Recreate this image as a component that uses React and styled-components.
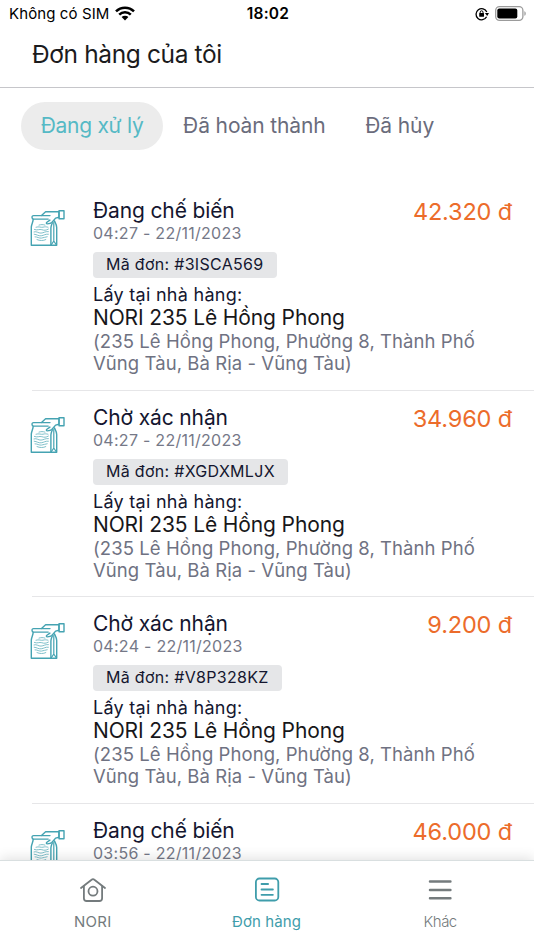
import React, { useState } from "react";
import styled, { createGlobalStyle } from "styled-components";

const tabs = ["Đang xử lý", "Đã hoàn thành", "Đã hủy"];

const orders = [
  { id: 1, status: "Đang chế biến", time: "04:27 - 22/11/2023", code: "#3ISCA569", price: "42.320 đ" },
  { id: 2, status: "Chờ xác nhận", time: "04:27 - 22/11/2023", code: "#XGDXMLJX", price: "34.960 đ" },
  { id: 3, status: "Chờ xác nhận", time: "04:24 - 22/11/2023", code: "#V8P328KZ", price: "9.200 đ" },
  { id: 4, status: "Đang chế biến", time: "03:56 - 22/11/2023", price: "46.000 đ" },
];

const WifiIcon = () => (
  <svg width="20" height="15" viewBox="0 0 20 15">
    <g fill="none" stroke="#000" strokeWidth="2.5">
      <path d="M1 5.4a12.7 12.7 0 0 1 18 0" />
      <path d="M4.2 8.7a8.2 8.2 0 0 1 11.6 0" />
    </g>
    <path d="M6.6 11.1a4.8 4.8 0 0 1 6.8 0L10 14.6z" />
  </svg>
);

const LockIcon = () => (
  <svg width="14" height="14" viewBox="0 0 14 14">
    <g fill="none" stroke="#000" strokeWidth="1.3">
      <path d="M11.6 9.8A5.6 5.6 0 1 1 11.8 5" />
      <path d="M5.2 6.4V5.2a1.4 1.4 0 0 1 2.8 0v1.2" strokeWidth="1" />
    </g>
    <rect x="4.2" y="6" width="4.8" height="3.7" rx="0.5" />
    <path d="M9.9 6h4.1L12.2 9z" />
  </svg>
);

const BatteryIcon = () => (
  <svg width="32" height="15" viewBox="0 0 32 15">
    <rect x="0.7" y="0.7" width="27.2" height="13.6" rx="3.8" fill="none" stroke="#9b9b9b" strokeWidth="1.3" />
    <rect x="2.3" y="2.5" width="20" height="10" rx="2" />
    <path d="M29.4 5.2c1.8.6 1.8 4 0 4.6z" fill="#9b9b9b" />
  </svg>
);

const BagIcon = () => (
  <svg width="36" height="38" viewBox="0 0 36 38" fill="none" stroke="#45a3b2" strokeLinejoin="round" strokeLinecap="round">
    <g strokeWidth="1.4">
      <path d="M20 5.6H3.6c-1.2 0-1.6.7-1.6 1.7s.5 1.8 1.6 1.8h14.6" />
      <path d="M3.2 9.4C3 12.4 1.3 14.4 1.3 17.5v17.8h25.4V17.5c0-3-1.4-4.6-2.3-6.6" />
      <path d="M11.5 5.4 15.6 1.7H29v5.6l-3.4.8-3.8 4.4c-1 1-2.4 1.3-4.4 1.4-1.2 0-1.3-1-.5-1.6l3-2.2" />
      <path d="M29 .8h5v7.9h-5z" />
      <path d="M20.9 35V18c0-2 .8-3.4 1.4-5" />
      <path d="M23.8 12.4V31l-2.7 4M23.8 31l2.6 4" strokeWidth="1.2" />
    </g>
    <g strokeWidth="0.8" opacity="0.85">
      <path d="M9 15.1c2-.7 4-.7 6 0" />
      <path d="M6 17.2c3-1 5 .5 7 0s3-.5 5 0" />
      <path d="M4.4 19.5c3 1.2 5-.6 7.4.2s4 .8 6.6-.6" />
      <path d="M4 21.9c3-1 4 1.4 7 1.2s4-1.9 7.4-1.5" />
      <path d="M4.2 24.2c3 .2 4 2 7 1.6s4-2 7.2-1.6" />
      <path d="M5 26.8c2.6 0 4 1.6 6.4 1.3s3.8-1.2 5.8-1.4" />
      <path d="M7 29.6c3 1.3 6 1.3 8.8 0" />
    </g>
  </svg>
);

const HomeIcon = () => (
  <svg width="28" height="26" viewBox="0 0 28 26" fill="none" stroke="currentColor" strokeWidth="1.8" strokeLinecap="round" strokeLinejoin="round">
    <path d="M2 11 12.6 2.7a2.2 2.2 0 0 1 2.8 0L26 11" />
    <path d="M4.9 9v12.2a2.8 2.8 0 0 0 2.8 2.8h12.6a2.8 2.8 0 0 0 2.8-2.8V9" />
    <circle cx="14" cy="14.2" r="4.5" />
  </svg>
);

const OrdersIcon = () => (
  <svg width="26" height="26" viewBox="0 0 26 26" fill="none" stroke="currentColor" strokeWidth="1.8" strokeLinecap="round">
    <rect x="1.9" y="1.5" width="22.4" height="22" rx="3.6" />
    <path d="M7.5 7h6.6M7.5 12.5h11.4M7.5 17.8h11.4" />
  </svg>
);

const MenuIcon = () => (
  <svg width="26" height="26" viewBox="0 0 26 26" fill="none" stroke="currentColor" strokeWidth="2.5" strokeLinecap="round">
    <path d="M3 4.4h20.4M3 12.9h20.4M3 21.3h20.4" />
  </svg>
);

const navItems = [
  { label: "NORI", Icon: HomeIcon, spacing: "0.3px" },
  { label: "Đơn hàng", Icon: OrdersIcon, spacing: "0.1px" },
  { label: "Khác", Icon: MenuIcon, spacing: "-0.5px", light: true },
];

const App = () => {
  const [tab, setTab] = useState(0);
  return (
    <Screen>
      <GlobalStyle />
      <StatusBar>
        <Carrier>
          Không có SIM <WifiIcon />
        </Carrier>
        <Clock>18:02</Clock>
        <Indicators>
          <LockIcon />
          <BatteryIcon />
        </Indicators>
      </StatusBar>
      <Header>Đơn hàng của tôi</Header>
      <Tabs>
        {tabs.map((name, i) => (
          <Tab key={name} $active={i === tab} onClick={() => setTab(i)}>
            {name}
          </Tab>
        ))}
      </Tabs>
      <List>
        {orders.map((order) => (
          <Order key={order.id}>
            <BagIcon />
            <Details>
              <Status>{order.status}</Status>
              <Time>{order.time}</Time>
              {order.code && (
                <>
                  <Code>Mã đơn: {order.code}</Code>
                  <Pickup>Lấy tại nhà hàng:</Pickup>
                  <Place>NORI 235 Lê Hồng Phong</Place>
                  <Address>
                    (235 Lê Hồng Phong, Phường 8, Thành Phố
                    <br />
                    Vũng Tàu, Bà Rịa - Vũng Tàu)
                  </Address>
                </>
              )}
            </Details>
            <Price>{order.price}</Price>
          </Order>
        ))}
      </List>
      <NavBar>
        {navItems.map(({ label, Icon, spacing, light }, i) => (
          <NavItem key={label} $active={i === 1} $spacing={spacing} $light={light}>
            <Icon />
            <span>{label}</span>
          </NavItem>
        ))}
      </NavBar>
    </Screen>
  );
};

const GlobalStyle = createGlobalStyle`
  * {
    box-sizing: border-box;
  }
  body {
    margin: 0;
    background: #fff;
    font-family: Inter, "Liberation Sans", sans-serif;
  }
  button {
    border: none;
    background: none;
    padding: 0;
    font: inherit;
  }
`;

const Screen = styled.div`
  display: flex;
  flex-direction: column;
  width: 534px;
  height: 950px;
  overflow: hidden;
  background: #fff;
`;

const StatusBar = styled.div`
  display: grid;
  grid-template-columns: 1fr auto 1fr;
  align-items: center;
  height: 27px;
  padding: 0 7px 0 9px;
  flex-shrink: 0;
  color: #000;
`;

const Carrier = styled.div`
  display: flex;
  align-items: center;
  gap: 6px;
  font-size: 15px;
  letter-spacing: 0.1px;
`;

const Clock = styled.div`
  font-size: 15.5px;
  font-weight: 600;
  letter-spacing: 0.2px;
`;

const Indicators = styled.div`
  display: flex;
  align-items: center;
  justify-content: flex-end;
  gap: 6px;
`;

const Header = styled.h1`
  margin: 0;
  height: 61px;
  flex-shrink: 0;
  padding: 11px 0 0 32px;
  border-bottom: 1.5px solid #c6c6ca;
  font-size: 24.5px;
  font-weight: 400;
  line-height: 33px;
  letter-spacing: -0.37px;
  color: #1b1b1d;
`;

const Tabs = styled.div`
  display: flex;
  flex-shrink: 0;
  height: 96px;
  padding: 14px 0 0 21px;
`;

const Tab = styled.button`
  height: 48px;
  padding: 0 20px 0 19.7px;
  border-radius: 24px;
  font-size: 21px;
  line-height: 48px;
  letter-spacing: ${({ $active }) => ($active ? "-0.28px" : "-0.12px")};
  white-space: nowrap;
  color: ${({ $active }) => ($active ? "#55b9c5" : "#6a6c7c")};
  background: ${({ $active }) => ($active ? "#ececec" : "transparent")};
`;

const List = styled.div`
  flex: 1;
  min-height: 0;
  overflow: hidden;
`;

const Order = styled.div`
  display: flex;
  align-items: flex-start;
  height: 206.5px;
  margin-left: 32px;
  padding: 13px 22px 0 0;
  border-bottom: 1px solid #e6e6e8;

  > svg {
    flex-shrink: 0;
    margin: 13px 27px 0 -2px;
  }
`;

const Details = styled.div`
  flex: 1;
  min-width: 0;
  white-space: nowrap;
`;

const Status = styled.div`
  padding-top: 1px;
  font-size: 21px;
  line-height: 26px;
  letter-spacing: -0.13px;
  color: #14162f;
`;

const Time = styled.div`
  font-size: 16px;
  line-height: 19px;
  letter-spacing: 0.27px;
  color: #757887;
`;

const Code = styled.div`
  width: fit-content;
  height: 26px;
  margin: 9px 0 6px;
  padding: 0 13px;
  border-radius: 4px;
  font-size: 16px;
  line-height: 25px;
  letter-spacing: 0.3px;
  color: #14162f;
  background: #e5e6e8;
`;

const Pickup = styled.div`
  font-size: 18px;
  line-height: 22px;
  letter-spacing: 0.28px;
  color: #14162f;
`;

const Place = styled.div`
  font-size: 21px;
  line-height: 24px;
  letter-spacing: -0.13px;
  color: #17171a;
`;

const Address = styled.div`
  font-size: 18.5px;
  line-height: 22.3px;
  letter-spacing: 0.07px;
  color: #6f7282;
`;

const Price = styled.div`
  font-size: 23.5px;
  line-height: 30px;
  letter-spacing: -0.15px;
  white-space: nowrap;
  color: #ec6c2b;
`;

const NavBar = styled.nav`
  position: relative;
  display: flex;
  flex-shrink: 0;
  height: 90px;
  padding: 0 7px 0 6px;
  border-top: 1.5px solid #d9dfe0;
  background: #fff;
  box-shadow: 0 -2px 12px rgba(0, 0, 0, 0.12);
`;

const NavItem = styled.button`
  display: flex;
  flex: 1;
  flex-direction: column;
  align-items: center;
  gap: 10px;
  padding-top: 16px;
  font-size: 15px;
  font-weight: ${({ $light }) => ($light ? 300 : 400)};
  letter-spacing: ${({ $spacing }) => $spacing};
  line-height: 18px;
  color: ${({ $active }) => ($active ? "#3f9dab" : "#747b7d")};

  svg {
    height: 26px;
  }
`;

export default App;
